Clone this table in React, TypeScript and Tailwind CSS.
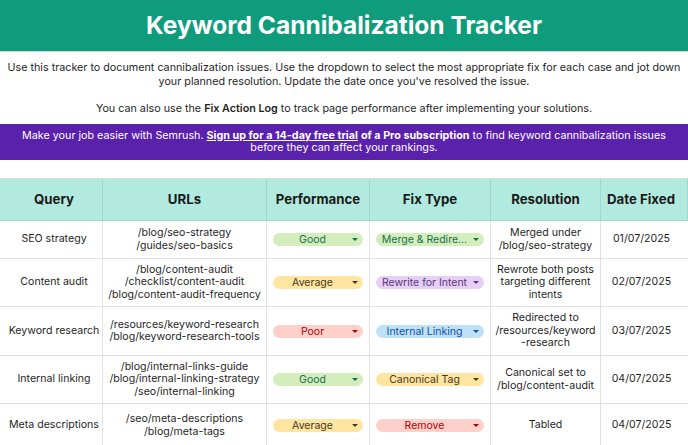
import React from "react";

type Tone = "green" | "yellow" | "red" | "purple" | "blue";

interface Row {
  query: string;
  urls: string[];
  perf: { label: string; tone: Tone };
  fix: { label: string; tone: Tone };
  resolution: string[];
  date: string;
  h: string;
}

const tones: Record<Tone, { pill: string; arrow: string }> = {
  green: { pill: "bg-[#d4edbc] text-[#11734b]", arrow: "border-t-[#11734b]" },
  yellow: { pill: "bg-[#ffe5a0] text-[#473821]", arrow: "border-t-[#473821]" },
  red: { pill: "bg-[#ffcfc9] text-[#b10202]", arrow: "border-t-[#b10202]" },
  purple: { pill: "bg-[#e6cff2] text-[#5a3286]", arrow: "border-t-[#5a3286]" },
  blue: { pill: "bg-[#bfe1f6] text-[#0a53a8]", arrow: "border-t-[#0a53a8]" },
};

const rows: Row[] = [
  {
    query: "SEO strategy",
    urls: ["/blog/seo-strategy", "/guides/seo-basics"],
    perf: { label: "Good", tone: "green" },
    // the sheet cuts this chip off
    fix: { label: "Merge & Redire...", tone: "green" },
    resolution: ["Merged under", "/blog/seo-strategy"],
    date: "01/07/2025",
    h: "h-[38px]",
  },
  {
    query: "Content audit",
    urls: ["/blog/content-audit", "/checklist/content-audit", "/blog/content-audit-frequency"],
    perf: { label: "Average", tone: "yellow" },
    fix: { label: "Rewrite for Intent", tone: "purple" },
    resolution: ["Rewrote both posts", "targeting different", "intents"],
    date: "02/07/2025",
    h: "h-[48px]",
  },
  {
    query: "Keyword research",
    urls: ["/resources/keyword-research", "/blog/keyword-research-tools"],
    perf: { label: "Poor", tone: "red" },
    fix: { label: "Internal Linking", tone: "blue" },
    resolution: ["Redirected to", "/resources/keyword", "-research"],
    date: "03/07/2025",
    h: "h-[49px]",
  },
  {
    query: "Internal linking",
    urls: ["/blog/internal-links-guide", "/blog/internal-linking-strategy", "/seo/internal-linking"],
    perf: { label: "Good", tone: "green" },
    fix: { label: "Canonical Tag", tone: "yellow" },
    resolution: ["Canonical set to", "/blog/content-audit"],
    date: "04/07/2025",
    h: "h-[48px]",
  },
  {
    query: "Meta descriptions",
    urls: ["/seo/meta-descriptions", "/blog/meta-tags"],
    perf: { label: "Average", tone: "yellow" },
    fix: { label: "Remove", tone: "red" },
    resolution: ["Tabled"],
    date: "04/07/2025",
    h: "h-[44px]",
  },
];

const cols = "grid grid-cols-[103px_164px_103px_121px_110px_87px]";

function Pill({ label, tone }: { label: string; tone: Tone }) {
  const t = tones[tone];
  return (
    <div className={`mx-[6px] flex h-[13px] items-center rounded-full ${t.pill}`}>
      <span className="min-w-0 flex-1 truncate pl-[4px] text-center text-[10.5px] leading-[13px]">{label}</span>
      <span className={`ml-[4px] mr-[5px] h-0 w-0 border-x-[3px] border-t-[3px] border-x-transparent ${t.arrow}`} />
    </div>
  );
}

export default function App() {
  const cell = "flex items-center justify-center border-b border-r border-[#e2e2e2] text-center";
  return (
    <div className="h-[445px] w-[688px] overflow-hidden bg-white text-[#1f1f1f] font-['Inter','Liberation_Sans',sans-serif]">
      <div className="flex h-[52px] items-center justify-center border-b border-[#d6d6d6] bg-[#0e9c7d] pb-[1px]">
        <h1 className="text-[24.5px] font-bold text-white">Keyword Cannibalization Tracker</h1>
      </div>

      <div className="flex h-[72px] flex-col justify-center px-1 text-center text-[10.75px] leading-[13.5px] text-[#1f1f1f]">
        <p>
          Use this tracker to document cannibalization issues. Use the dropdown to select the most appropriate fix for each case and jot down
          your planned resolution. Update the date once you've resolved the issue.
        </p>
        <p className="mt-[13.5px]">
          You can also use the <b className="font-semibold">Fix Action Log</b> to track page performance after implementing your solutions.
        </p>
      </div>

      <div className="flex h-[36px] items-center justify-center bg-[#5a21ad] px-2 text-center text-[10.75px] leading-[12.5px] text-white">
        <p>
          Make your job easier with Semrush. <b className="font-bold underline">Sign up for a 14-day free trial</b>{" "}
          <b className="font-bold">of a Pro subscription</b> to find keyword cannibalization issues before they can affect your rankings.
        </p>
      </div>

      <div className="h-[19px] border-b border-[#cfe3de]" />

      <div className={`${cols} h-[42px] bg-[#b2eadf] text-[13.25px] font-bold text-[#1a1a1a]`}>
        {["Query", "URLs", "Performance", "Fix Type", "Resolution", "Date Fixed"].map((h, i) => (
          <div
            key={h}
            className={`flex items-center justify-center border-b border-r border-[#9fd9cc] ${i === 0 ? "pl-[6px]" : ""} ${i === 5 ? "pr-[6px]" : ""}`}
          >
            {h}
          </div>
        ))}
      </div>

      {rows.map((r) => (
        <div key={r.query} className={`${cols} ${r.h} text-[10.6px] leading-[12.5px]`}>
          <div className={`${cell} pl-[6px]`}>{r.query}</div>
          <div className={`${cell} flex-col`}>
            {r.urls.map((u) => (
              <span key={u}>{u}</span>
            ))}
          </div>
          <div className={`${cell} !block`}>
            <div className="flex h-full flex-col justify-center">
              <Pill {...r.perf} />
            </div>
          </div>
          <div className={`${cell} !block`}>
            <div className="flex h-full flex-col justify-center">
              <Pill {...r.fix} />
            </div>
          </div>
          <div className={`${cell} flex-col px-1`}>
            {r.resolution.map((l) => (
              <span key={l}>{l}</span>
            ))}
          </div>
          <div className={`${cell} border-r-0 pr-[6px]`}>{r.date}</div>
        </div>
      ))}
    </div>
  );
}
